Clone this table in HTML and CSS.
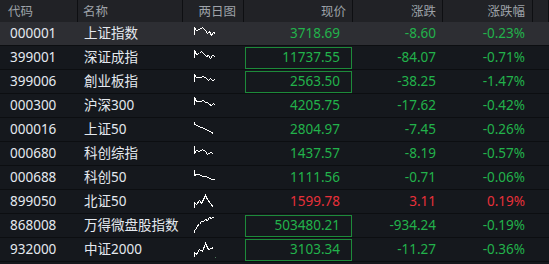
FILE: index.html
```html
<!DOCTYPE html>
<html lang="zh">
<head>
<meta charset="utf-8">
<title>指数行情</title>
<link rel="stylesheet" href="styles.css">
</head>
<body>
<div class="table">
  <div class="row head">
    <div class="c code">代码</div>
    <div class="c name">名称</div>
    <div class="c chart">两日图</div>
    <div class="c price">现价</div>
    <div class="c chg">涨跌</div>
    <div class="c pct">涨跌幅</div>
    <div class="c tail"></div>
  </div>

  <div class="row sel">
    <div class="c code">000001</div>
    <div class="c name">上证指数</div>
    <div class="c chart"><svg class="spark" viewBox="0 0 24 14"><polyline transform="translate(0.5 0.5)" points="1,10 1,3 3,6 6,5 9,3 12,6 14,9 16,7 18,11 20,8 22,9"/></svg></div>
    <div class="c price down">3718.69</div>
    <div class="c chg down">-8.60</div>
    <div class="c pct down">-0.23%</div>
    <div class="c tail"></div>
  </div>

  <div class="row">
    <div class="c code">399001</div>
    <div class="c name">深证成指</div>
    <div class="c chart"><svg class="spark" viewBox="0 0 24 14"><polyline transform="translate(0.5 0.5)" points="1,9 1,2 3,6 6,5 8,3 11,6 13,8 15,7 17,10 19,7 22,8"/></svg></div>
    <div class="c price down boxed">11737.55</div>
    <div class="c chg down">-84.07</div>
    <div class="c pct down">-0.71%</div>
    <div class="c tail"></div>
  </div>

  <div class="row">
    <div class="c code">399006</div>
    <div class="c name">創业板指</div>
    <div class="c chart"><svg class="spark" viewBox="0 0 24 14"><polyline transform="translate(0.5 0.5)" points="1,9 1,2 3,5 7,5 10,4 13,6 15,8 17,6 19,8 22,7"/></svg></div>
    <div class="c price down boxed">2563.50</div>
    <div class="c chg down">-38.25</div>
    <div class="c pct down">-1.47%</div>
    <div class="c tail"></div>
  </div>

  <div class="row">
    <div class="c code">000300</div>
    <div class="c name">沪深300</div>
    <div class="c chart"><svg class="spark" viewBox="0 0 24 14"><polyline transform="translate(0.5 0.5)" points="1,8 1,1 3,5 7,5 10,4 12,6 14,6 16,8 18,9 20,7 22,9"/></svg></div>
    <div class="c price down">4205.75</div>
    <div class="c chg down">-17.62</div>
    <div class="c pct down">-0.42%</div>
    <div class="c tail"></div>
  </div>

  <div class="row">
    <div class="c code">000016</div>
    <div class="c name">上证50</div>
    <div class="c chart"><svg class="spark" viewBox="0 0 24 14"><polyline transform="translate(0.5 0.5)" points="1,1 1,4 4,5 7,7 9,7 12,9 15,10 18,12 20,13"/></svg></div>
    <div class="c price down">2804.97</div>
    <div class="c chg down">-7.45</div>
    <div class="c pct down">-0.26%</div>
    <div class="c tail"></div>
  </div>

  <div class="row">
    <div class="c code">000680</div>
    <div class="c name">科创综指</div>
    <div class="c chart"><svg class="spark" viewBox="0 0 24 14"><polyline transform="translate(0.5 0.5)" points="1,1 1,9 3,6 6,7 9,5 12,7 14,10 17,8 20,9"/></svg></div>
    <div class="c price down">1437.57</div>
    <div class="c chg down">-8.19</div>
    <div class="c pct down">-0.57%</div>
    <div class="c tail"></div>
  </div>

  <div class="row">
    <div class="c code">000688</div>
    <div class="c name">科创50</div>
    <div class="c chart"><svg class="spark" viewBox="0 0 24 14"><polyline transform="translate(0.5 0.5)" points="1,1 1,7 3,6 6,6 9,8 12,8 15,9 18,11 21,11"/></svg></div>
    <div class="c price down">1111.56</div>
    <div class="c chg down">-0.71</div>
    <div class="c pct down">-0.06%</div>
    <div class="c tail"></div>
  </div>

  <div class="row">
    <div class="c code">899050</div>
    <div class="c name">北证50</div>
    <div class="c chart"><svg class="spark tall" viewBox="0 0 24 18"><polyline transform="translate(0.5 0.5)" points="1,15 1,10 3,12 6,8 8,11 12,3 14,7 17,11 20,15"/></svg></div>
    <div class="c price up">1599.78</div>
    <div class="c chg up">3.11</div>
    <div class="c pct up">0.19%</div>
    <div class="c tail"></div>
  </div>

  <div class="row">
    <div class="c code">868008</div>
    <div class="c name">万得微盘股指数</div>
    <div class="c chart"><svg class="spark tall" viewBox="0 0 24 18"><polyline transform="translate(0.5 0.5)" points="1,16 1,14 3,12 4,9 6,8 8,5 10,5 12,3 14,4 16,1 18,2 21,0"/></svg></div>
    <div class="c price down boxed">503480.21</div>
    <div class="c chg down">-934.24</div>
    <div class="c pct down">-0.19%</div>
    <div class="c tail"></div>
  </div>

  <div class="row">
    <div class="c code">932000</div>
    <div class="c name">中证2000</div>
    <div class="c chart"><svg class="spark tall" viewBox="0 0 24 18"><polyline transform="translate(0.5 0.5)" points="1,16 1,12 3,14 6,9 9,11 12,3 15,9 18,8 20,7"/><rect class="dot" x="22" y="17" width="1" height="1"/></svg></div>
    <div class="c price down boxed">3103.34</div>
    <div class="c chg down">-11.27</div>
    <div class="c pct down">-0.36%</div>
    <div class="c tail"></div>
  </div>
</div>
</body>
</html>
```

FILE: styles.css
```css
* { box-sizing: border-box; }
html, body {
  margin: 0;
  padding: 0;
  background: #15181d;
}
body {
  width: 549px;
  height: 264px;
  overflow: hidden;
  font-family: "Noto Sans", "Noto Sans CJK SC", sans-serif;
  font-size: 13.5px;
  color: #e4e9ef;
}
.table {
  display: flex;
  flex-direction: column;
}
.row {
  display: grid;
  grid-template-columns: 78px 105px 61px 109px 90px 90px 16px;
  height: 24px;
  border-bottom: 1px solid #0c0e11;
  background: #15181d;
}
.row.head {
  height: 22px;
  border-bottom: none;
  background: #212226;
  font-family: "Noto Sans CJK SC", sans-serif;
  font-size: 12.5px;
  color: #9ea2a9;
}
.row.sel {
  background: #2d2e33;
}
.c {
  display: flex;
  align-items: center;
  white-space: nowrap;
  line-height: 1;
  min-width: 0;
}
.head .c {
  border-right: 1px solid #0e0f12;
}
.code { padding-left: 10px; }
.name { padding-left: 6px; }
.head .code { padding-left: 8px; }
.head .name { padding-left: 5px; }
.chart { padding-left: 10px; align-items: flex-start; }
.head .chart { justify-content: flex-end; padding-right: 7px; align-items: center; }
.price { justify-content: flex-end; padding-right: 13px; }
.head .price { padding-right: 6px; }
.chg { justify-content: flex-end; padding-right: 7px; }
.head .chg { padding-right: 6px; }
.pct { justify-content: flex-end; padding-right: 8px; }
.head .pct { padding-right: 7px; }
.boxed {
  border: 1px solid #1d8a3a;
  margin: 1px 1px 0 1px;
  padding-right: 11px;
}
.down { color: #22b24b; }
.up { color: #e8303a; }
.spark {
  width: 24px;
  height: 14px;
  margin-top: 2px;
  overflow: visible;
}
.spark.tall { height: 18px; }
.spark polyline {
  fill: none;
  stroke: #ffffff;
  stroke-width: 1;
  stroke-linejoin: miter;
  shape-rendering: crispEdges;
}
.spark .dot { fill: #4e7a5a; }
```
